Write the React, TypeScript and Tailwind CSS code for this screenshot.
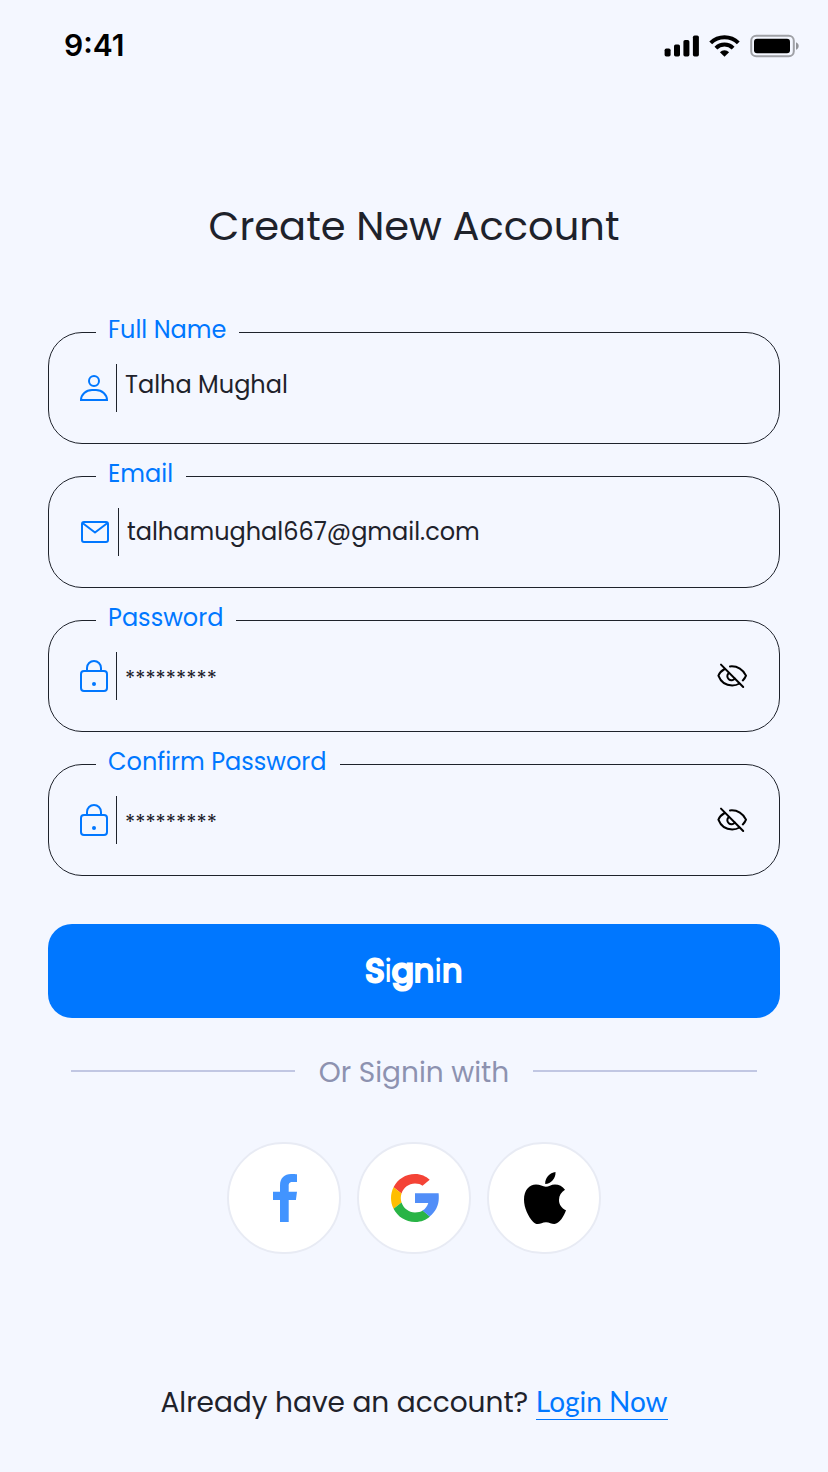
import type { ReactNode } from "react";

function SignalIcon() {
  return (
    <svg className="h-[22px] w-[35px]" viewBox="0 0 35 22" fill="#000" aria-hidden="true">
      <rect x="0.600" y="13.5" width="6" height="8" rx="1.7" />
      <rect x="10" y="9.5" width="6" height="12" rx="1.7" />
      <rect x="19.400" y="5" width="6" height="16.5" rx="1.7" />
      <rect x="28.900" y="0.5" width="6" height="21" rx="1.7" />
    </svg>
  );
}

function WifiIcon() {
  return (
    <svg className="h-[22px] w-[31px]" viewBox="0 0 31 22" fill="none" stroke="#000" strokeWidth="4" aria-hidden="true">
      <path d="M1.7 7.9a19.6 19.6 0 0 1 27.6 0" />
      <path d="M6.9 13.1a12.2 12.2 0 0 1 17.2 0" />
      <path d="M15.5 21.8 10.9 17.2a6.6 6.6 0 0 1 9.2 0Z" fill="#000" stroke="none" />
    </svg>
  );
}

function BatteryIcon() {
  return (
    <svg className="h-[24px] w-[50px]" viewBox="0 0 50 24" aria-hidden="true">
      <rect x="1.2" y="1.7" width="42.6" height="20.6" rx="5" fill="none" stroke="#000" strokeOpacity="0.35" strokeWidth="2" />
      <rect x="4" y="4.7" width="36" height="14.6" rx="3" fill="#000" />
      <path d="M46 8.2c1.7.7 2.7 2.1 2.7 3.8s-1 3.1-2.7 3.8Z" fill="#000" fillOpacity="0.4" />
    </svg>
  );
}

function PersonIcon() {
  return (
    <svg className="h-7 w-7" viewBox="0 0 28 28" fill="none" stroke="#0077ff" strokeWidth="2" aria-hidden="true">
      <circle cx="14" cy="7" r="5" />
      <path d="M1 26h26c0-5.5-5-10-11-10h-4C6 16 1 20.500 1 26Z" />
    </svg>
  );
}

function MailIcon() {
  return (
    <svg className="h-[22px] w-[30px]" viewBox="0 0 30 22" fill="none" stroke="#0077ff" strokeWidth="2" strokeLinejoin="round" aria-hidden="true">
      <rect x="2" y="1" width="26" height="20" rx="2" />
      <path d="m2.500 2 12.500 9.500L27.500 2" />
    </svg>
  );
}

function LockIcon() {
  return (
    <svg className="h-8 w-7" viewBox="0 0 28 32" fill="none" stroke="#0077ff" strokeWidth="2" aria-hidden="true">
      <rect x="1" y="11" width="26" height="20" rx="3" />
      <path d="M7 11V8a7 7 0 0 1 14 0v3" />
      <circle cx="14" cy="24" r="2" fill="#0077ff" stroke="none" />
    </svg>
  );
}

function EyeOffIcon() {
  return (
    <svg className="h-[26px] w-[30px]" viewBox="0 0 30 26" fill="none" stroke="#000" strokeWidth="2" strokeLinecap="round" strokeLinejoin="round" aria-hidden="true">
      <path d="M13 3.400C20.500 2.600 26.500 7 29 12.700c-.6 1.700-1.700 3.300-3.200 4.700" />
      <path d="M7.600 6C4.700 7.600 2.500 10 1.400 12.700 3.700 18.700 9 22.500 15.200 22.500c2.700 0 5.200-.7 7.300-2" />
      <path d="M4 1.600 26.200 24" />
      <path d="M11.600 10.200a4.100 4.100 0 1 0 6.200 5.300" />
    </svg>
  );
}

function FacebookLogo() {
  return (
    <svg className="h-12 w-6" viewBox="0 0 24 48" fill="#4294ff" aria-hidden="true">
      <path d="M24 .3V8h-4.400c-3.300 0-3.900 1.600-3.900 4v5.700H24L22.900 26h-7.200v22H7V26H0v-8.300h7v-6.300C7 4 11.500 0 18 0c2.700 0 4.900.1 6 .3Z" />
    </svg>
  );
}

function GoogleLogo() {
  return (
    <svg className="h-12 w-12" viewBox="0 0 48 48" aria-hidden="true">
      <path fill="#f44336" d="M24 9.500c3.540 0 5.500.900 7.500 2.300l7.200-6C34.700 2.200 30.470 0 24 0 14.620 0 6.510 5.380 2.560 13.220l7.980 6.190C12.430 13.720 17.740 9.500 24 9.500z" />
      <path fill="#ffbe00" d="M10.530 28.590c-.48-1.450-.76-2.990-.76-4.590s.27-3.140.76-4.590l-7.980-6.190C.920 16.460 0 20.120 0 24c0 3.880.920 7.540 2.560 10.780l7.970-6.190z" />
      <path fill="#29b446" d="M24 48c6.480 0 11.200-2.130 14.900-5.500l-7.200-5.900c-2.150 1.450-4.460 1.900-7.700 1.900-6.260 0-11.570-4.220-13.470-9.910l-7.980 6.190C6.510 42.620 14.620 48 24 48z" />
      <path fill="#518ef8" d="M47.600 19.300H24V29h13.300c-.9 3.200-3 5.900-5.800 7.600l7.200 5.900C44.200 38.100 47.800 31.600 47.800 24c0-1.600 0-3.200-.2-4.700z" />
    </svg>
  );
}

function AppleLogo() {
  return (
    <svg className="h-[52px] w-[42px]" viewBox="0 0 42 52" fill="#000" aria-hidden="true">
      <path d="M31.500 0C31.900 6 27 12 21.200 12 20.700 6 25.800.8 31.500 0Z" />
      <path d="M41 17.700C38.500 14.300 35 12.400 31 12.400c-4 0-6.500 2.300-9.200 2.300-3 0-5.800-2.200-9.800-2.200C5.500 12.500 0 18 0 27.500 0 36 4.500 45 9 49.700c1.500 1.600 3 2.300 4.800 2.300 2.700 0 4.700-1.800 8.200-1.800s5.300 1.800 8.300 1.800C35.500 52 40 43.800 42 38.300 37.500 36.300 35 32.500 35 28c0-4.500 2.300-8 6-10.300Z" />
    </svg>
  );
}

type FieldProps = {
  id: string;
  label: string;
  value: string;
  icon: ReactNode;
  type?: string;
  secret?: boolean;
  raised?: boolean;
};

function Field({ id, label, value, icon, type = "text", secret = false, raised = false }: FieldProps) {
  return (
    <fieldset className="h-[124px] min-w-0 rounded-[34px] border border-[#1e222b]">
      <legend className="ml-[47px] pr-[13px] pb-1 pl-3 text-2xl leading-5 text-[#0077ff]">
        <label htmlFor={id}>{label}</label>
      </legend>
      <div className="flex h-24 items-center gap-2 px-[31px] pb-2">
        {icon}
        <span className="h-12 w-px shrink-0 bg-[#1e222b]" />
        <input
          id={id}
          type={type}
          defaultValue={value}
          autoComplete="off"
          className={
            secret
              ? "min-w-0 flex-1 bg-transparent pt-1.5 text-[21px] text-[#1e222b] outline-none"
              : raised
                ? "min-w-0 flex-1 bg-transparent pb-1.5 text-2xl text-[#1e222b] outline-none"
                : "min-w-0 flex-1 bg-transparent text-2xl text-[#1e222b] outline-none"
          }
        />
        {secret && (
          <button type="button" aria-label={`Show ${label.toLowerCase()}`} className="pr-px">
            <EyeOffIcon />
          </button>
        )}
      </div>
    </fieldset>
  );
}

function SocialButton({ name, children }: { name: string; children: ReactNode }) {
  return (
    <button
      type="button"
      aria-label={`Sign in with ${name}`}
      className="flex h-28 w-[114px] items-center justify-center rounded-full border-2 border-[#e8ebf4] bg-white pl-[2px]"
    >
      {children}
    </button>
  );
}

export default function App() {
  return (
    <div className="min-h-screen bg-[#f4f7ff] pb-[51px] font-['Poppins','Open_Sans',sans-serif] text-[#1e222b]">
      <header className="flex h-[92px] items-center justify-between pr-7 pl-16">
        <span className="pb-0.5 font-['Inter',sans-serif] text-[30px] font-semibold text-black">9:41</span>
        <div className="flex items-center gap-[10px]">
          <SignalIcon />
          <WifiIcon />
          <BatteryIcon />
        </div>
      </header>

      <main className="px-12">
        <h1 className="mt-[108px] text-center text-[40px] leading-[52px]">Create New Account</h1>

        <form className="mt-[68px]" onSubmit={(event) => event.preventDefault()}>
          <div className="flex flex-col gap-5">
            <Field id="full-name" label="Full Name" value="Talha Mughal" icon={<PersonIcon />} raised />
            <Field id="email" label="Email" type="email" value="talhamughal667@gmail.com" icon={<MailIcon />} />
            <Field id="password" label="Password" value="*********" icon={<LockIcon />} secret />
            <Field id="confirm-password" label="Confirm Password" value="*********" icon={<LockIcon />} secret />
          </div>
          <button type="submit" className="mt-12 h-[94px] w-full rounded-3xl bg-[#0077ff] text-[32px] text-white">
            <span className="[-webkit-text-stroke:3px_white]">S</span>i
            <span className="[-webkit-text-stroke:3px_white]">g</span>
            <span className="[-webkit-text-stroke:2px_white]">n</span>i
            <span className="[-webkit-text-stroke:2px_white]">n</span>
          </button>
        </form>

        <div className="mt-[29px] flex items-center gap-6 px-[23px] text-[28px] leading-[44px] text-[#8d92b0]">
          <span className="h-[2px] flex-1 bg-[#c1c7e3]" />
          <span className="pt-1">Or Signin with</span>
          <span className="h-[2px] flex-1 bg-[#c1c7e3]" />
        </div>

        <div className="mt-[47px] flex justify-center gap-4">
          <SocialButton name="Facebook">
            <FacebookLogo />
          </SocialButton>
          <SocialButton name="Google">
            <GoogleLogo />
          </SocialButton>
          <SocialButton name="Apple">
            <AppleLogo />
          </SocialButton>
        </div>

        <p className="mt-[127px] text-center text-[28px] leading-10">
          Already have an account?{" "}
          <a href="#login" className="border-b border-current pb-px font-['Lato',sans-serif] text-[#0077ff]">
            Login Now
          </a>
        </p>
      </main>
    </div>
  );
}
